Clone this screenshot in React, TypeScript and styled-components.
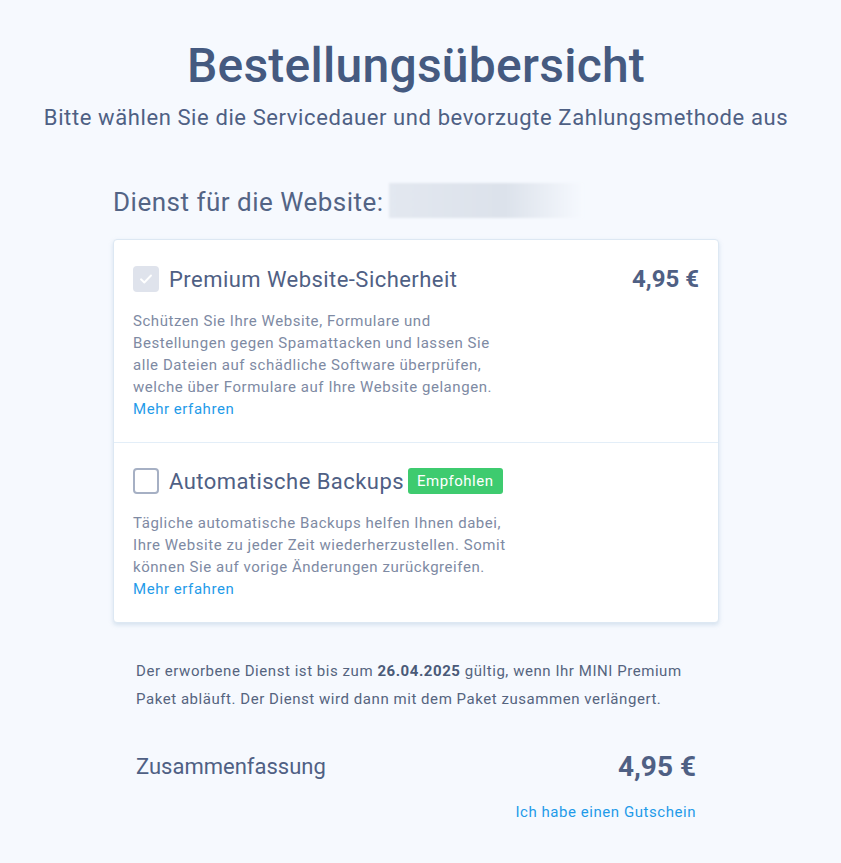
import styled, { createGlobalStyle } from 'styled-components'

const GlobalStyle = createGlobalStyle`
  html, body {
    margin: 0;
    padding: 0;
    background: #f6f9fe;
  }
  body {
    font-family: Roboto, "Liberation Sans", Arial, sans-serif;
    color: #4a5b7d;
  }
`

const Page = styled.div`
  width: 832px;
  display: flex;
  flex-direction: column;
  align-items: center;
  padding-top: 36px;
  padding-bottom: 40px;
`

const Title = styled.h1`
  margin: 0;
  font-size: 48px;
  font-weight: 500;
  letter-spacing: 0.25px;
  color: #455a80;
  line-height: 60px;
`

const Subtitle = styled.p`
  margin: 8px 0 0;
  font-size: 22px;
  letter-spacing: 0.6px;
  color: #4e6084;
  line-height: 28px;
`

const Content = styled.div`
  width: 606px;
  margin-top: 50px;
`

const SiteRow = styled.div`
  display: flex;
  align-items: center;
  gap: 5px;
  height: 36px;
  font-size: 26px;
  letter-spacing: 0.5px;
  color: #536485;
`

const SiteLabel = styled.span`
  padding-top: 4px;
`

const BlurredDomain = styled.div`
  width: 194px;
  height: 35px;
  background: linear-gradient(90deg, #e3e8f0 0%, #dce2eb 60%, #f6f9fe 100%);
  filter: blur(1px);
`

const Card = styled.div`
  margin-top: 21px;
  background: #fff;
  border: 1px solid #dde8f3;
  border-radius: 4px;
  box-shadow: 0 2px 4px rgba(150, 180, 210, 0.35);
`

const Option = styled.div<{ $last?: boolean }>`
  padding: ${(p) => (p.$last ? '25px' : '26px')} 19px 22px 19px;
  border-bottom: ${(p) => (p.$last ? 'none' : '1px solid #e3eef8')};
`

const OptionHead = styled.div`
  display: flex;
  align-items: center;
  height: 26px;
`

const Check = styled.div<{ $checked?: boolean }>`
  width: 26px;
  height: 26px;
  box-sizing: border-box;
  border-radius: 4px;
  flex-shrink: 0;
  display: flex;
  align-items: center;
  justify-content: center;
  background: ${(p) => (p.$checked ? '#dfe3ec' : '#fff')};
  border: ${(p) => (p.$checked ? 'none' : '2px solid #a6b0c4')};
`

const OptionName = styled.span`
  margin-left: 10px;
  font-size: 22px;
  letter-spacing: 0.45px;
  color: #4f6084;
`

const Badge = styled.span`
  margin-left: 4px;
  background: #3ecb6f;
  color: #fff;
  font-size: 15px;
  letter-spacing: 0.5px;
  line-height: 26px;
  padding: 0 9px;
  border-radius: 3px;
`

const Price = styled.span`
  margin-left: auto;
  font-size: 24px;
  font-weight: 700;
  color: #4f6084;
`

const Description = styled.p`
  margin: 18px 0 0;
  width: 380px;
  font-size: 15px;
  letter-spacing: 0.55px;
  line-height: 22px;
  color: #7e8aa3;
`

const Link = styled.a`
  display: block;
  font-size: 15px;
  letter-spacing: 0.55px;
  line-height: 22px;
  color: #1f9be9;
  text-decoration: none;
  cursor: pointer;
`

const Summary = styled.div`
  padding: 34px 23px 0;
`

const Info = styled.p`
  margin: 0;
  font-size: 15px;
  letter-spacing: 0.55px;
  line-height: 28px;
  color: #55647f;

  strong {
    font-weight: 700;
    color: #4a5a78;
  }
`

const TotalRow = styled.div`
  display: flex;
  justify-content: space-between;
  align-items: center;
  margin-top: 37px;
`

const TotalLabel = styled.span`
  font-size: 22px;
  color: #4f6084;
`

const TotalPrice = styled.span`
  font-size: 28px;
  font-weight: 700;
  color: #4f6084;
`

const Voucher = styled(Link)`
  text-align: right;
  margin-top: 18px;
`

const CheckMark = () => (
  <svg width="16" height="16" viewBox="0 0 16 16" fill="none">
    <path d="M3 8.3l3.3 3.2 6.7-7" stroke="#fff" strokeWidth="1.9" strokeLinecap="round" strokeLinejoin="round" />
  </svg>
)

export default function App() {
  return (
    <>
      <GlobalStyle />
      <Page>
        <Title>Bestellungsübersicht</Title>
        <Subtitle>Bitte wählen Sie die Servicedauer und bevorzugte Zahlungsmethode aus</Subtitle>
        <Content>
          <SiteRow>
            <SiteLabel>Dienst für die Website:</SiteLabel>
            <BlurredDomain />
          </SiteRow>
          <Card>
            <Option>
              <OptionHead>
                <Check $checked>
                  <CheckMark />
                </Check>
                <OptionName>Premium Website-Sicherheit</OptionName>
                <Price>4,95 €</Price>
              </OptionHead>
              <Description>
                Schützen Sie Ihre Website, Formulare und Bestellungen gegen Spamattacken und lassen Sie alle
                Dateien auf schädliche Software überprüfen, welche über Formulare auf Ihre Website gelangen.
              </Description>
              <Link>Mehr erfahren</Link>
            </Option>
            <Option $last>
              <OptionHead>
                <Check />
                <OptionName>Automatische Backups</OptionName>
                <Badge>Empfohlen</Badge>
              </OptionHead>
              <Description>
                Tägliche automatische Backups helfen Ihnen dabei, Ihre Website zu jeder Zeit
                wiederherzustellen. Somit können Sie auf vorige Änderungen zurückgreifen.
              </Description>
              <Link>Mehr erfahren</Link>
            </Option>
          </Card>
          <Summary>
            <Info>
              Der erworbene Dienst ist bis zum <strong>26.04.2025</strong> gültig, wenn Ihr MINI Premium
              Paket abläuft. Der Dienst wird dann mit dem Paket zusammen verlängert.
            </Info>
            <TotalRow>
              <TotalLabel>Zusammenfassung</TotalLabel>
              <TotalPrice>4,95 €</TotalPrice>
            </TotalRow>
            <Voucher>Ich habe einen Gutschein</Voucher>
          </Summary>
        </Content>
      </Page>
    </>
  )
}
